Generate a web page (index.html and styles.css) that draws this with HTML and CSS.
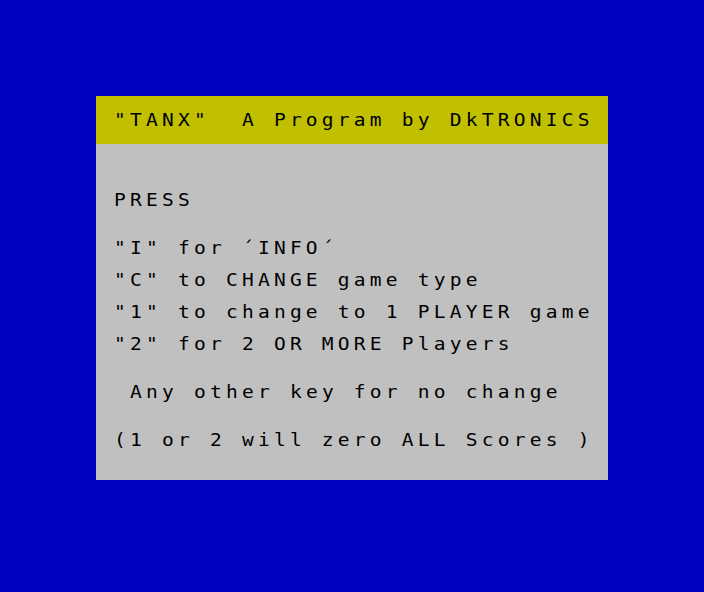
FILE: index.html
```html
<!DOCTYPE html>
<html lang="en">
<head>
    <meta charset="UTF-8">
    <title>TANX</title>
    <link rel="stylesheet" href="styles.css">
</head>
<body>
    <div class="screen">
        <div class="paper">
            <div class="title"><div class="line">"TANX"  A Program by DkTRONICS</div></div>
            <div class="line press">PRESS</div>
            <div class="line gap2">"I" for ´INFO´</div>
            <div class="line">"C" to CHANGE game type</div>
            <div class="line">"1" to change to 1 PLAYER game</div>
            <div class="line">"2" for 2 OR MORE Players</div>
            <div class="line gap2 indent">Any other key for no change</div>
            <div class="line gap2">(1 or 2 will zero ALL Scores )</div>
        </div>
    </div>
</body>
</html>
```

FILE: styles.css
```css
html,body {
    margin: 0;
    padding: 0;
    background: #0000c0;
}
.screen {
    width: 704px;
    height: 592px;
    padding: 96px;
    box-sizing: border-box;
}
.paper {
    width: 512px;
    height: 384px;
    background: #c0c0c0;
    color: #000;
    font-family: "DejaVu Sans Mono", monospace;
    font-size: 17px;
    /* spectrum glyphs are wider: stretch and keep a 16px cell */
    letter-spacing: 3.67px;
}
.title {
    height: 48px;
    padding-top: 16px;
    box-sizing: border-box;
    background: #c0c000;
}
.line {
    height: 16px;
    line-height: 17px;
    padding-left: 15.65px;
    margin-top: 16px;
    white-space: pre;
    transform: scaleX(1.15);
    transform-origin: left center;
}
.title .line {
    margin-top: 0;
}
.press {
    margin-top: 48px;
}
.gap2 {
    margin-top: 32px;
}
.indent {
    padding-left: 29.57px;
}
```
